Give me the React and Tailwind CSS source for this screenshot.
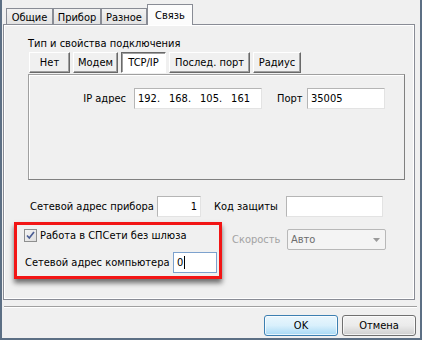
const font = { fontFamily: '"DejaVu Sans Condensed", "Liberation Sans", sans-serif' }

const Tab = ({ label, width, active }) => (
  <div
    className={`flex items-center justify-center border border-[#898c95] border-b-0 ${width} ${
      active ? 'relative z-10 h-[21px] bg-[#fcfcfc]' : 'h-[17px] bg-gradient-to-b from-[#f2f2f2] to-[#e1e1e1]'
    }`}>
    {label}
  </div>
)

const ClassicButton = ({ label, width, pressed }) => (
  <div
    className={`flex h-[21px] items-center justify-center border ${width} ${
      pressed
        ? 'bg-white border-t-[#696969] border-l-[#696969] border-r-white border-b-white shadow-[inset_1px_1px_0_#a0a0a0]'
        : 'bg-[#f0f0f0] border-t-white border-l-white border-r-[#696969] border-b-[#696969] shadow-[inset_-1px_-1px_0_#a0a0a0]'
    }`}>
    {label}
  </div>
)

const Field = ({ width, children, focused, align = 'text-left' }) => (
  <div
    className={`flex h-[21px] items-center border bg-white px-[3px] ${width} ${align} ${
      focused ? 'border-[#7da2ce]' : 'border-t-[#b5b5b5] border-l-[#b5b5b5] border-r-[#e3e3e3] border-b-[#e3e3e3]'
    }`}>
    {children}
  </div>
)

const DialogButton = ({ label, primary }) => (
  <div
    className={`flex h-[21px] w-[74px] items-center justify-center rounded-[3px] border shadow-[inset_0_0_0_1px_rgba(255,255,255,0.7)] ${
      primary ? 'border-[#3c7fb1] bg-gradient-to-b from-[#eaf6fd] via-[#d9f0fc] to-[#a7d9f5]' : 'border-[#707070] bg-gradient-to-b from-[#f2f2f2] via-[#ebebeb] to-[#cfcfcf]'
    }`}>
    {label}
  </div>
)

export default function App() {
  return (
    <div style={font} className="flex h-[340px] w-[422px] flex-col border-x-2 border-b-2 border-[#5c6f84] bg-[#f0f0f0] text-[11px] text-black leading-none">
      {/* tabs */}
      <div className="mt-[4px] flex h-[21px] items-end pl-[4px]">
        <Tab label="Общие" width="w-[47px]" />
        <Tab label="Прибор" width="w-[48px]" />
        <Tab label="Разное" width="w-[46px]" />
        <Tab label="Связь" width="w-[46px]" active />
      </div>

      {/* tab page */}
      <div className="-mt-px ml-[1px] h-[276px] w-[412px] border border-[#898c95] shadow-[inset_1px_1px_0_#fff,inset_-1px_-1px_0_#fff]">
        <div className="ml-[24px] mt-[12px] h-[14px] leading-[14px]">Тип и свойства подключения</div>

        <div className="ml-[25px] mt-[1px] flex gap-[3px]">
          <ClassicButton label="Нет" width="w-[41px]" />
          <ClassicButton label="Модем" width="w-[45px]" />
          <ClassicButton label="TCP/IP" width="w-[45px]" pressed />
          <ClassicButton label="Послед. порт" width="w-[81px]" />
          <ClassicButton label="Радиус" width="w-[48px]" />
        </div>

        <div className="ml-[24px] mt-[1px] h-[106px] w-[377px] border border-[#a0a0a0] border-r-[#808080] border-b-[#808080] pt-[13px] shadow-[inset_1px_1px_0_#fff]">
          <div className="flex items-center">
            <div className="w-[97px] text-right">IP адрес</div>
            <div className="ml-[8px]">
              <Field width="w-[128px]">
                <div className="flex gap-[9px]">
                  <span>192.</span>
                  <span>168.</span>
                  <span>105.</span>
                  <span>161</span>
                </div>
              </Field>
            </div>
            <div className="ml-[15px] w-[30px]">Порт</div>
            <Field width="w-[78px]">35005</Field>
          </div>
        </div>

        <div className="ml-[26px] mt-[16px] flex items-center">
          <div className="w-[127px]">Сетевой адрес прибора</div>
          <Field width="w-[44px] justify-end">1</Field>
          <div className="ml-[13px] w-[72px]">Код защиты</div>
          <Field width="w-[97px]" />
        </div>

        <div className="mt-[5px] flex items-start">
          <div className="ml-[10px] w-[208px] border-[3px] border-[#f21515] pb-[3px] pl-[7px] pt-[4px] shadow-[0_4px_5px_rgba(0,0,0,0.55)]">
            <div className="flex items-center gap-[3px]">
              <div className="flex h-[13px] w-[13px] items-center justify-center border border-[#8e8f8f] bg-gradient-to-br from-[#f4f4f4] to-[#dedede]">
                <svg width="11" height="11" viewBox="0 0 11 11">
                  <path d="M2 5.5 L4.3 8 L9 2" fill="none" stroke="#4a5d94" strokeWidth="1.7" />
                </svg>
              </div>
              <span>Работа в СПСети без шлюза</span>
            </div>
            <div className="mt-[10px] flex items-center pl-[1px]">
              <div className="w-[148px]">Сетевой адрес компьютера</div>
              <Field width="w-[44px]" focused>
                <span>0</span>
                <span className="ml-px h-[13px] w-px bg-black" />
              </Field>
            </div>
          </div>

          <div className="ml-[10px] mt-[7px] flex items-center">
            <div className="w-[55px] text-[#a3a3a3]">Скорость</div>
            <div className="flex h-[21px] w-[99px] items-center justify-between rounded-[2px] border border-[#b8b8b8] bg-[#f4f4f4] pl-[3px] pr-[5px] text-[#6d6d6d]">
              <span>Авто</span>
              <svg width="7" height="4" viewBox="0 0 7 4">
                <path d="M0 0 H7 L3.5 4 Z" fill="#9a9a9a" />
              </svg>
            </div>
          </div>
        </div>
      </div>

      {/* separator */}
      <div className="ml-[2px] mt-[6px] h-[2px] w-[413px] border-t border-b border-t-[#a0a0a0] border-b-white" />

      {/* buttons */}
      <div className="mt-[7px] flex justify-end gap-[4px] pr-[4px]">
        <DialogButton label="OK" primary />
        <DialogButton label="Отмена" />
      </div>
    </div>
  )
}
